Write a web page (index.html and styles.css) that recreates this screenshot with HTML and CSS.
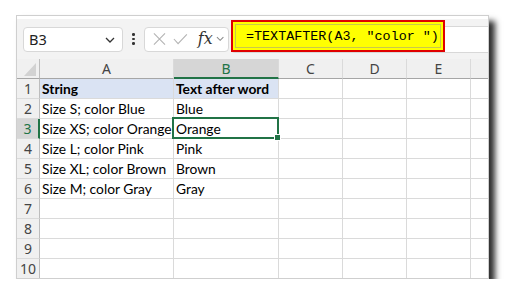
FILE: index.html
```html
<!DOCTYPE html>
<html>
<head>
<meta charset="utf-8">
<link rel="stylesheet" href="styles.css">
</head>
<body>
<div class="window">
  <div class="topstrip"></div>
  <div class="toolbar">
    <div class="namebox">
      <span class="nb-text">B3</span>
      <svg class="chev" width="10" height="6" viewBox="0 0 10 6"><path d="M1 1 L5 5 L9 1" fill="none" stroke="#333" stroke-width="1.3"/></svg>
    </div>
    <div class="dots"><i></i><i></i><i></i></div>
    <div class="funcbox">
      <svg width="14" height="14" viewBox="0 0 14 14"><path d="M1 1 L13 13 M13 1 L1 13" stroke="#b4b4b4" stroke-width="1.2" fill="none"/></svg>
      <svg width="16" height="12" viewBox="0 0 16 12"><path d="M1 6 L5.5 11 L15 1" stroke="#b4b4b4" stroke-width="1.2" fill="none"/></svg>
      <span class="fx">fx</span>
      <svg width="9" height="6" viewBox="0 0 9 6"><path d="M1 1 L4.5 4.5 L8 1" fill="none" stroke="#888" stroke-width="1.1"/></svg>
    </div>
    <div class="formula-input"></div>
    <div class="formula-hl"><span>=TEXTAFTER(A3, "color ")</span></div>
  </div>
  <div class="grid">
    <div class="ch corner"><span class="tri"></span></div>
    <div class="ch">A</div>
    <div class="ch sel">B</div>
    <div class="ch">C</div>
    <div class="ch">D</div>
    <div class="ch">E</div>
    <div class="ch"></div>

    <div class="rh">1</div>
    <div class="c hd">String</div>
    <div class="c hd">Text after word</div>
    <div class="c"></div><div class="c"></div><div class="c"></div><div class="c"></div>

    <div class="rh">2</div>
    <div class="c">Size S; color Blue</div>
    <div class="c">Blue</div>
    <div class="c"></div><div class="c"></div><div class="c"></div><div class="c"></div>

    <div class="rh sel">3</div>
    <div class="c">Size XS; color Orange</div>
    <div class="c active">Orange<span class="handle"></span></div>
    <div class="c"></div><div class="c"></div><div class="c"></div><div class="c"></div>

    <div class="rh">4</div>
    <div class="c">Size L; color Pink</div>
    <div class="c">Pink</div>
    <div class="c"></div><div class="c"></div><div class="c"></div><div class="c"></div>

    <div class="rh">5</div>
    <div class="c">Size XL; color Brown</div>
    <div class="c">Brown</div>
    <div class="c"></div><div class="c"></div><div class="c"></div><div class="c"></div>

    <div class="rh">6</div>
    <div class="c">Size M; color Gray</div>
    <div class="c">Gray</div>
    <div class="c"></div><div class="c"></div><div class="c"></div><div class="c"></div>

    <div class="rh">7</div>
    <div class="c"></div><div class="c"></div><div class="c"></div><div class="c"></div><div class="c"></div><div class="c"></div>
    <div class="rh">8</div>
    <div class="c"></div><div class="c"></div><div class="c"></div><div class="c"></div><div class="c"></div><div class="c"></div>
    <div class="rh">9</div>
    <div class="c"></div><div class="c"></div><div class="c"></div><div class="c"></div><div class="c"></div><div class="c"></div>
    <div class="rh">10</div>
    <div class="c"></div><div class="c"></div><div class="c"></div><div class="c"></div><div class="c"></div><div class="c"></div>
  </div>
</div>
</body>
</html>
```
FILE: styles.css
```css
html, body {
  margin: 0;
  padding: 0;
  background: #ffffff;
}
body {
  padding: 15px 0 0 16px;
  font-family: Lato, "Noto Sans", sans-serif;
}
.window {
  width: 473px;
  height: 264px;
  box-sizing: border-box;
  border: 1px solid #cfcfcf;
  background: #f3f3f3;
  overflow: hidden;
  box-shadow: 6px 6px 6px rgba(0, 0, 0, 0.82);
}
.topstrip {
  height: 3px;
  background: #ffffff;
}
.toolbar {
  position: relative;
  height: 40px;
  display: flex;
  align-items: center;
  padding-left: 6px;
  box-sizing: border-box;
}
.namebox {
  width: 100px;
  height: 25px;
  box-sizing: border-box;
  background: #fff;
  border: 1px solid #d8d8d8;
  border-radius: 4px;
  display: flex;
  align-items: center;
  justify-content: space-between;
  padding: 0 7px 0 5px;
  font-family: "Noto Sans", sans-serif;
  font-size: 14.5px;
  color: #222;
}
.chev { margin-top: 1px; }
.dots {
  width: 21px;
  display: flex;
  flex-direction: column;
  align-items: center;
  gap: 2px;
}
.dots i {
  width: 2.5px;
  height: 2.5px;
  background: #333;
  border-radius: 50%;
}
.funcbox {
  width: 85px;
  height: 25px;
  box-sizing: border-box;
  background: #fff;
  border: 1px solid #d8d8d8;
  border-radius: 4px;
  display: flex;
  align-items: center;
  padding: 0 4px 0 8px;
  gap: 7px;
}
.fx {
  font-family: "DejaVu Serif", "Liberation Serif", serif;
  font-style: italic;
  font-size: 16px;
  color: #333;
  margin-left: 3px;
  margin-right: -4px;
  line-height: 1;
}
.formula-input {
  flex: 1;
  height: 25px;
  margin-left: 2px;
  background: #fff;
  border: 1px solid #d8d8d8;
  border-right: none;
  border-radius: 4px 0 0 4px;
}
.formula-hl {
  position: absolute;
  left: 214px;
  top: 1px;
  width: 214px;
  height: 32px;
  box-sizing: border-box;
  background: #ffff00;
  border: 2px solid #e00000;
  display: flex;
  align-items: center;
  padding-left: 13px;
  padding-top: 1px;
  box-shadow: inset 0 0 0 2px #ffff00, inset 0 0 0 3px #c9c94a;
}
.formula-hl span {
  font-family: "Liberation Mono", "DejaVu Sans Mono", monospace;
  font-size: 13.4px;
  color: #000;
  white-space: pre;
}
.grid {
  display: grid;
  grid-template-columns: 23px 134px 105px 64px 64px 64px 64px;
  grid-template-rows: 20px repeat(10, 20px);
  background: #fff;
}
.grid > div {
  box-sizing: border-box;
  border-right: 1px solid #dadada;
  border-bottom: 1px solid #dadada;
  font-size: 13.8px;
  line-height: 20px;
  white-space: nowrap;
  overflow: visible;
}
.ch {
  background: #f0f0f0;
  color: #444;
  text-align: center;
  border-bottom: 1px solid #a6a6a6 !important;
  font-family: "Noto Sans", sans-serif;
  font-size: 14px !important;
  line-height: 20px !important;
}
.ch.sel {
  background: #d6d6d6;
  color: #217346;
  border-bottom: 2px solid #217346 !important;
}
.corner {
  position: relative;
  border-right: 1px solid #bdbdbd !important;
}
.tri {
  position: absolute;
  right: 3px;
  bottom: 2px;
  width: 0;
  height: 0;
  border-left: 12px solid transparent;
  border-bottom: 13px solid #d2d2d2;
}
.rh {
  background: #f0f0f0;
  color: #444;
  text-align: center;
  border-right: 1px solid #bdbdbd !important;
  font-family: "Noto Sans", sans-serif;
  font-size: 14px !important;
}
.rh.sel {
  background: #d6d6d6;
  color: #217346;
  border-right: 2px solid #217346 !important;
}
.c {
  padding-left: 2px;
  color: #000;
}
.c.hd {
  background: #dae3f3;
  font-weight: bold;
}
.c.active {
  position: relative;
}
.c.active::before {
  content: "";
  position: absolute;
  left: -2px;
  top: -2px;
  right: -1px;
  bottom: -1px;
  border: 2px solid #217346;
}
.handle {
  position: absolute;
  right: -3px;
  bottom: -3px;
  width: 5px;
  height: 5px;
  background: #217346;
  border: 1px solid #fff;
}
```
